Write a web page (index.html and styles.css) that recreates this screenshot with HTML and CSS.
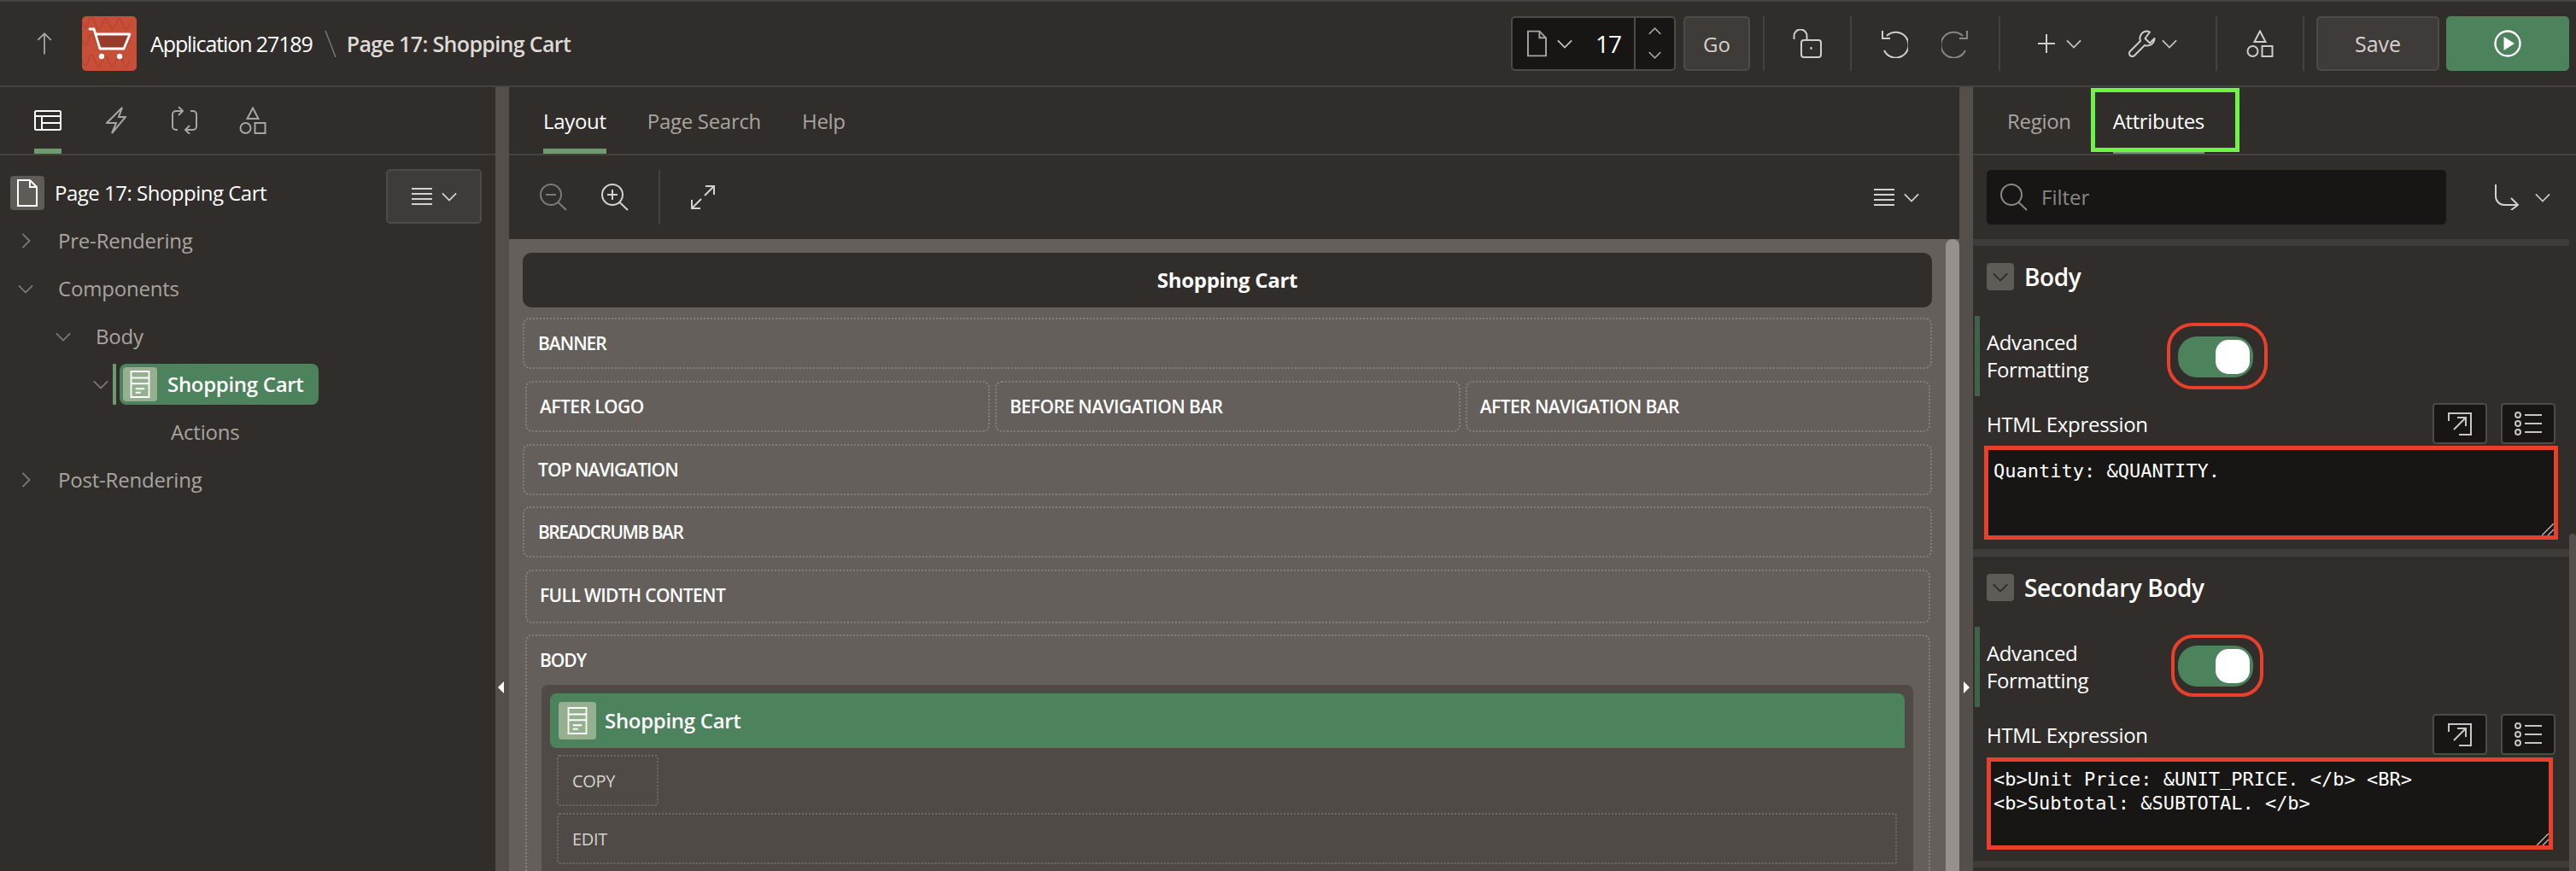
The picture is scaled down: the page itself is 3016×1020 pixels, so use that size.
FILE: index.html
```html
<!DOCTYPE html>
<html lang="en">
<head>
<meta charset="utf-8">
<title>Page 17: Shopping Cart</title>
<link rel="stylesheet" href="styles.css">
</head>
<body>
<svg class="defs" width="0" height="0" aria-hidden="true">
  <defs>
    <symbol id="i-down" viewBox="0 0 20 12"><path d="M1 1.500 10 10.500 19 1.500" fill="none" stroke="currentColor" stroke-width="2"/></symbol>
    <symbol id="i-shapes" viewBox="0 0 32 32"><path d="M16 1.500 22.500 14H9.500Z M18.500 19H30.500V31H18.500Z" fill="none" stroke="currentColor" stroke-width="2"/><circle cx="7.500" cy="25" r="6" fill="none" stroke="currentColor" stroke-width="2"/></symbol>
    <symbol id="i-region" viewBox="0 0 32 44"><path d="M2 2H30V42H2Z M2 12H30 M2 21H30" fill="none" stroke="currentColor" stroke-width="2.400"/><path d="M9 29H23 M9 35H17" fill="none" stroke="currentColor" stroke-width="2.400"/></symbol>
    <symbol id="i-menu" viewBox="0 0 24 20"><path d="M0 1H24 M0 7H24 M0 13H24 M0 19H24" fill="none" stroke="currentColor" stroke-width="2"/></symbol>
    <symbol id="i-open" viewBox="0 0 30 28"><path d="M2 11V2H28V27H14" fill="none" stroke="currentColor" stroke-width="2"/><path d="M8 21 22 7 M12 7H22V17" fill="none" stroke="currentColor" stroke-width="2"/></symbol>
    <symbol id="i-list" viewBox="0 0 32 28"><circle cx="4" cy="4" r="3" fill="none" stroke="currentColor" stroke-width="2"/><circle cx="4" cy="14" r="3" fill="none" stroke="currentColor" stroke-width="2"/><circle cx="4" cy="24" r="3" fill="none" stroke="currentColor" stroke-width="2"/><path d="M12 4H32 M12 14H32 M12 24H32" fill="none" stroke="currentColor" stroke-width="2"/></symbol>
    <symbol id="i-page" viewBox="0 0 24 32"><path d="M1 1H15L23 9V31H1Z" fill="none" stroke="currentColor" stroke-width="2"/><path d="M15 1V9H23" fill="none" stroke="currentColor" stroke-width="2"/></symbol>
  </defs>
</svg>

<header class="topbar">
  <div class="up">
    <svg class="ic-up" viewBox="0 0 20 30"><path d="M10 29V2 M1.500 10.500 10 2l8.500 8.500" fill="none" stroke="currentColor" stroke-width="2"/></svg>
  </div>
  <div class="app-logo">
    <svg class="cart" viewBox="0 0 64 64">
      <path class="squig" d="M0 6c3 10 5 10 8 0s5-4 8 4 5 6 8-2 5-6 8 2 5 6 8-2 5-6 8 2 5 6 8-2 M0 26c3 10 5 10 8 0s5-4 8 4 5 6 8-2 5-6 8 2 5 6 8-2 5-6 8 2 5 6 8-2 M0 50c3 10 5 10 8 0s5-4 8 4 5 6 8-2 5-6 8 2 5 6 8-2 5-6 8 2 5 6 8-2"/>
      <path d="M16 21H56L49 38H21Z" fill="#973b2a"/>
      <path d="M9 15H14L21 38H49L56 21H16" fill="none" stroke="#fff" stroke-width="2.800" stroke-linecap="round" stroke-linejoin="round"/>
      <circle cx="23" cy="47" r="3.200" fill="#fff"/><circle cx="44" cy="47" r="3.200" fill="#fff"/>
    </svg>
  </div>
  <span class="app-name">Application 27189</span>
  <svg class="crumb-sep" viewBox="0 0 14 32"><path d="M1 1 13 32" fill="none" stroke="currentColor" stroke-width="1.400"/></svg>
  <span class="page-name">Page 17: Shopping Cart</span>

  <div class="spacer"></div>

  <div class="page-picker">
    <svg class="ic-page" width="23" height="32"><use href="#i-page"/></svg>
    <svg class="ic-chev picker-chev" width="18" height="11"><use href="#i-down"/></svg>
    <span class="picker-num">17</span>
    <div class="stepper">
      <svg class="step" width="15" height="9" viewBox="0 0 20 12"><path d="M1 10.500 10 1.500 19 10.500" fill="none" stroke="currentColor" stroke-width="2"/></svg>
      <svg class="step" width="15" height="9"><use href="#i-down"/></svg>
    </div>
  </div>
  <button class="btn btn-go">Go</button>

  <span class="tb-divider tb-d1"></span>
  <svg class="tb-ic ic-lock" width="34" height="34" viewBox="0 0 34 34"><path d="M1.500 12V8a7.500 7.500 0 0 1 15 0v5" fill="none" stroke="currentColor" stroke-width="2"/><rect x="10" y="13" width="23" height="20" rx="3" fill="none" stroke="currentColor" stroke-width="2"/><path d="M21.500 21v3" stroke="currentColor" stroke-width="2"/></svg>
  <span class="tb-divider tb-d2"></span>
  <svg class="tb-ic ic-undo" width="32" height="34" viewBox="0 0 32 34"><path d="M7 8A15 15 0 1 1 4 25" fill="none" stroke="currentColor" stroke-width="2"/><path d="M2 2V11H11" fill="none" stroke="currentColor" stroke-width="2"/></svg>
  <svg class="tb-ic ic-redo" width="32" height="34" viewBox="0 0 32 34"><path d="M25 8A15 15 0 1 0 28 25" fill="none" stroke="currentColor" stroke-width="2"/><path d="M30 2V11H21" fill="none" stroke="currentColor" stroke-width="2"/></svg>
  <span class="tb-divider tb-d3"></span>
  <svg class="tb-ic ic-plus" width="20" height="22" viewBox="0 0 20 22"><path d="M10 0V22 M0 11H20" stroke="currentColor" stroke-width="2"/></svg>
  <svg class="ic-chev plus-chev" width="18" height="11"><use href="#i-down"/></svg>
  <svg class="tb-ic ic-wrench" width="32" height="32" viewBox="0 0 32 32"><path d="M22 1.500a8.500 8.500 0 0 0-8 11.500L2 25a3.500 3.500 0 0 0 5 5l12-12a8.500 8.500 0 0 0 11.500-8L25 15.500 19.500 10 25 2.500a8 8 0 0 0-3-1Z" fill="none" stroke="currentColor" stroke-width="2" stroke-linejoin="round"/></svg>
  <svg class="ic-chev wrench-chev" width="18" height="11"><use href="#i-down"/></svg>
  <span class="tb-divider tb-d4"></span>
  <svg class="tb-ic ic-shapes" width="32" height="32"><use href="#i-shapes"/></svg>
  <span class="tb-divider tb-d5"></span>
  <button class="btn btn-save">Save</button>
  <button class="btn btn-run" aria-label="Run">
    <svg width="32" height="32" viewBox="0 0 32 32"><circle cx="16" cy="16" r="14.500" fill="none" stroke="#fff" stroke-width="2.400"/><path d="M11.500 8 24 16 11.500 24Z" fill="#fff"/></svg>
  </button>
</header>

<main class="workspace">
  <section class="left">
    <nav class="tabs left-tabs">
      <div class="icon-tab active">
        <svg class="tab-ic on" width="32" height="24" viewBox="0 0 32 24"><rect x="1" y="1" width="30" height="22" rx="1.500" fill="none" stroke="currentColor" stroke-width="2"/><path d="M1 7H31 M9 7V23 M9 15H31" fill="none" stroke="currentColor" stroke-width="2"/></svg>
      </div>
      <div class="icon-tab">
        <svg class="tab-ic" width="24" height="32" viewBox="0 0 24 32"><path d="M19 1 1 19H12L7 31 23 12H15Z" fill="none" stroke="currentColor" stroke-width="2"/></svg>
      </div>
      <div class="icon-tab">
        <svg class="tab-ic" width="32" height="32" viewBox="0 0 32 32"><path d="M14 5H6A4 4 0 0 0 2 9V23A4 4 0 0 0 6 27H8 M23 5H26A4 4 0 0 1 30 9V23A4 4 0 0 1 26 27H17" fill="none" stroke="currentColor" stroke-width="2"/><path d="M9 0l5 5-5 5 M22 22l-5 5 5 5" fill="none" stroke="currentColor" stroke-width="2"/></svg>
      </div>
      <div class="icon-tab">
        <svg class="tab-ic" width="32" height="32"><use href="#i-shapes"/></svg>
      </div>
    </nav>
    <div class="tree">
      <div class="tree-head">
        <span class="page-badge"><svg width="24" height="32"><use href="#i-page"/></svg></span>
        <span class="tree-title">Page 17: Shopping Cart</span>
        <button class="btn menu-btn">
          <svg width="24" height="20"><use href="#i-menu"/></svg>
          <svg width="18" height="11"><use href="#i-down"/></svg>
        </button>
      </div>
      <div class="tree-row lvl0"><svg class="tw tw-right" width="11" height="18" viewBox="0 0 12 20"><path d="M1.500 1 10.500 10 1.500 19" fill="none" stroke="currentColor" stroke-width="2"/></svg><span>Pre-Rendering</span></div>
      <div class="tree-row lvl0"><svg class="tw" width="18" height="11"><use href="#i-down"/></svg><span>Components</span></div>
      <div class="tree-row lvl1"><svg class="tw" width="18" height="11"><use href="#i-down"/></svg><span>Body</span></div>
      <div class="tree-row lvl2">
        <svg class="tw" width="18" height="11"><use href="#i-down"/></svg>
        <span class="sel-bar"></span>
        <span class="sel-pill">
          <span class="region-badge"><svg width="24" height="34"><use href="#i-region"/></svg></span>
          <span class="sel-text">Shopping Cart</span>
        </span>
      </div>
      <div class="tree-row lvl3"><span>Actions</span></div>
      <div class="tree-row lvl0"><svg class="tw tw-right" width="11" height="18" viewBox="0 0 12 20"><path d="M1.500 1 10.500 10 1.500 19" fill="none" stroke="currentColor" stroke-width="2"/></svg><span>Post-Rendering</span></div>
    </div>
  </section>

  <div class="gutter"><span class="arrow arrow-left"></span></div>

  <section class="center">
    <nav class="tabs center-tabs">
      <span class="tab active">Layout</span>
      <span class="tab">Page Search</span>
      <span class="tab">Help</span>
    </nav>
    <div class="canvas-tools">
      <svg class="zoom-ic dim" width="32" height="32" viewBox="0 0 32 32"><circle cx="13" cy="13" r="12" fill="none" stroke="currentColor" stroke-width="2"/><path d="M7 13H19 M21.500 22 31 31" fill="none" stroke="currentColor" stroke-width="2"/></svg>
      <svg class="zoom-ic zoom-in" width="32" height="32" viewBox="0 0 32 32"><circle cx="13" cy="13" r="12" fill="none" stroke="currentColor" stroke-width="2"/><path d="M7 13H19 M13 7V19 M21.500 22 31 31" fill="none" stroke="currentColor" stroke-width="2"/></svg>
      <span class="tool-div"></span>
      <svg class="expand" width="28" height="28" viewBox="0 0 28 28"><path d="M17 1H27V11 M27 1 16 12 M11 27H1V17 M1 27 12 16" fill="none" stroke="currentColor" stroke-width="2"/></svg>
      <div class="spacer"></div>
      <svg class="tool-menu" width="24" height="20"><use href="#i-menu"/></svg>
      <svg class="tool-chev" width="18" height="11"><use href="#i-down"/></svg>
    </div>
    <div class="canvas">
      <div class="canvas-inner">
        <div class="page-head">Shopping Cart</div>
        <div class="slot s-banner">BANNER</div>
        <div class="slot-row">
          <div class="slot">AFTER LOGO</div>
          <div class="slot">BEFORE NAVIGATION BAR</div>
          <div class="slot">AFTER NAVIGATION BAR</div>
        </div>
        <div class="slot s-topnav">TOP NAVIGATION</div>
        <div class="slot s-crumb">BREADCRUMB BAR</div>
        <div class="slot s-full">FULL WIDTH CONTENT</div>
        <div class="slot body-slot">
          <div class="body-label">BODY</div>
          <div class="region">
            <div class="region-head">
              <span class="region-icon"><svg width="24" height="34"><use href="#i-region"/></svg></span>
              <span>Shopping Cart</span>
            </div>
            <div class="inner-slot copy">COPY</div>
            <div class="inner-slot edit">EDIT</div>
          </div>
        </div>
      </div>
      <div class="scrollbar"></div>
    </div>
  </section>

  <div class="gutter"><span class="arrow arrow-right"></span></div>

  <section class="right">
    <nav class="tabs right-tabs">
      <span class="tab">Region</span>
      <span class="tab active">Attributes<span class="green-mark"></span></span>
    </nav>
    <div class="filter-row">
      <div class="filter">
        <svg class="search" width="32" height="32" viewBox="0 0 32 32"><circle cx="13" cy="13" r="12" fill="none" stroke="currentColor" stroke-width="2"/><path d="M21.500 22 31 31" fill="none" stroke="currentColor" stroke-width="2"/></svg>
        <span>Filter</span>
      </div>
      <svg class="goto" width="28" height="30" viewBox="0 0 28 30"><path d="M1 0V14A10 10 0 0 0 11 24H27 M19 16 27 24 19 30" fill="none" stroke="currentColor" stroke-width="2"/></svg>
      <svg class="goto-chev" width="18" height="11"><use href="#i-down"/></svg>
    </div>
    <div class="props">
      <div class="props-col">
        <div class="group">
          <div class="group-head">
            <span class="collapse"><svg width="18" height="11"><use href="#i-down"/></svg></span>
            <span class="group-title">Body</span>
          </div>
          <div class="field">
            <span class="field-label">Advanced<br>Formatting</span>
            <span class="red-round first"><span class="switch"><span class="knob"></span></span></span>
          </div>
          <div class="expr-head">
            <span class="expr-label">HTML Expression</span>
            <span class="square"><svg width="30" height="28"><use href="#i-open"/></svg></span>
            <span class="square"><svg width="32" height="28"><use href="#i-list"/></svg></span>
          </div>
          <div class="code code-a"><pre>Quantity: &amp;QUANTITY.</pre><svg class="grip" width="14" height="14" viewBox="0 0 14 14"><path d="M0 14 14 0 M7 14 14 7" stroke="#b5b2ad" stroke-width="1.500"/></svg></div>
        </div>
        <div class="group group-2">
          <div class="group-head">
            <span class="collapse"><svg width="18" height="11"><use href="#i-down"/></svg></span>
            <span class="group-title">Secondary Body</span>
          </div>
          <div class="field">
            <span class="field-label">Advanced<br>Formatting</span>
            <span class="red-round second"><span class="switch"><span class="knob"></span></span></span>
          </div>
          <div class="expr-head">
            <span class="expr-label">HTML Expression</span>
            <span class="square"><svg width="30" height="28"><use href="#i-open"/></svg></span>
            <span class="square"><svg width="32" height="28"><use href="#i-list"/></svg></span>
          </div>
          <div class="code code-b"><pre>&lt;b&gt;Unit Price: &amp;UNIT_PRICE. &lt;/b&gt; &lt;BR&gt;
&lt;b&gt;Subtotal: &amp;SUBTOTAL. &lt;/b&gt;</pre><svg class="grip" width="14" height="14" viewBox="0 0 14 14"><path d="M0 14 14 0 M7 14 14 7" stroke="#b5b2ad" stroke-width="1.500"/></svg></div>
        </div>
        <div class="group-rest"></div>
      </div>
      <div class="props-scroll"><span class="props-thumb"></span></div>
    </div>
  </section>
</main>
</body>
</html>
```

FILE: styles.css
```css
* { box-sizing: border-box; }
html, body { margin: 0; height: 100%; }
body {
  width: 3016px;
  height: 1020px;
  overflow: hidden;
  background: #312d2a;
  color: #fff;
  font-family: "Open Sans", "Noto Sans", sans-serif;
  font-size: 24px;
}
.defs { position: absolute; }
svg { display: block; flex: none; }
pre { margin: 0; font: inherit; }
.spacer { flex: 1; }

/* top bar */
.topbar {
  height: 102px;
  display: flex;
  align-items: center;
  border-top: 2px solid #45413d;
  border-bottom: 2px solid #45413d;
  color: #d5d2ce;
}
.up { width: 96px; padding-left: 43px; color: #a8a5a0; }
.ic-up { width: 18px; height: 28px; }
.app-logo { width: 64px; height: 64px; border-radius: 5px; background: #c74f38; margin-right: 16px; overflow: hidden; }
.cart { width: 64px; height: 64px; }
.squig { fill: none; stroke: #b8452f; stroke-width: 1.500; }
.app-name { font-size: 25px; color: #fff; letter-spacing: -1.100px; white-space: nowrap; }
.crumb-sep { width: 14px; height: 32px; margin: 0 12px 0 14px; color: #7d7974; }
.page-name { font-size: 25px; font-weight: 600; color: #dedbd7; letter-spacing: -.650px; white-space: nowrap; }

.page-picker {
  width: 193px;
  height: 64px;
  display: flex;
  align-items: center;
  background: #171614;
  border: 2px solid #4e4a46;
  border-radius: 5px;
  color: #a8a5a0;
}
.ic-page { margin-left: 17px; }
.picker-chev { margin-left: 12px; }
.picker-num { margin-left: 27px; width: 30px; color: #fff; font-size: 28px; letter-spacing: -1px; }
.stepper {
  margin-left: auto;
  width: 47px;
  height: 100%;
  border-left: 2px solid #4e4a46;
  display: flex;
  flex-direction: column;
  align-items: center;
  justify-content: space-between;
  padding: 11px 0 12px;
}
.btn {
  font: inherit;
  color: #d5d2ce;
  background: #3f3b38;
  border: 2px solid #4e4a46;
  border-radius: 5px;
  padding: 0;
  display: flex;
  align-items: center;
  justify-content: center;
}
.btn-go { width: 78px; height: 64px; margin-left: 9px; font-size: 24px; }
.tb-divider { width: 2px; height: 64px; background: #45413d; flex: none; }
.tb-d1 { margin-left: 15px; }
.tb-d2 { margin-left: 33px; }
.tb-d3 { margin-left: 35px; }
.tb-d4 { margin-left: 45px; }
.tb-d5 { margin-left: 34px; }
.ic-chev { color: #c8c5c0; }
.tb-ic { color: #d0cdc8; }
.ic-lock { margin-left: 33px; }
.ic-undo { margin-left: 34px; }
.ic-redo { margin-left: 39px; color: #8a8682; }
.ic-plus { margin-left: 44px; }
.plus-chev { margin-left: 13px; }
.ic-wrench { margin-left: 55px; }
.wrench-chev { margin-left: 7px; }
.ic-shapes { margin-left: 34px; }
.btn-save { width: 144px; height: 64px; margin-left: 14px; font-size: 25px; }
.btn-run { width: 144px; height: 64px; margin-left: 8px; background: #4c825c; border-color: #4c825c; margin-right: 8px; }

/* columns */
.workspace { display: flex; height: 918px; }
.left { width: 580px; flex: none; }
.center { width: 1698px; flex: none; display: flex; flex-direction: column; }
.right { width: 706px; flex: none; display: flex; flex-direction: column; }
.gutter { width: 16px; flex: none; background: #544f4b; position: relative; }
.arrow { position: absolute; top: 696px; width: 0; height: 0; border-top: 7px solid transparent; border-bottom: 7px solid transparent; }
.arrow-left { left: 3px; border-right: 7px solid #fff; }
.arrow-right { left: 5px; border-left: 7px solid #fff; }

/* tabs */
.tabs {
  height: 80px;
  flex: none;
  display: flex;
  border-bottom: 2px solid #45413d;
}
.left-tabs { padding-left: 40px; gap: 48px; }
.icon-tab { width: 32px; height: 78px; display: flex; align-items: center; justify-content: center; color: #a8a5a0; }
.icon-tab.active { box-shadow: inset 0 -6px 0 #6f9a6f; }
.tab-ic.on { color: #fff; }
.tab { height: 78px; display: flex; align-items: center; font-size: 24px; color: #a8a5a0; letter-spacing: -.300px; position: relative; white-space: nowrap; }
.tab.active { color: #fff; box-shadow: inset 0 -6px 0 #6f9a6f; }
.center-tabs { padding-left: 40px; gap: 48px; }
.right-tabs { padding-left: 40px; gap: 49px; }
.right-tabs .active { letter-spacing: -.400px; }
.green-mark { position: absolute; left: -26px; right: -41px; top: 1px; bottom: 2px; border: 5px solid #6cf542; }

/* tree */
.tree { padding-top: 16px; }
.tree-head { display: flex; height: 56px; align-items: center; padding: 0 16px 0 12px; }
.page-badge { width: 40px; height: 40px; border-radius: 4px; background: #5f5b57; display: flex; align-items: center; justify-content: center; color: #fff; }
.page-badge svg { width: 24px; height: 32px; }
.tree-title { margin-left: 12px; flex: 1; letter-spacing: -.500px; white-space: nowrap; padding-bottom: 2px; }
.menu-btn { width: 112px; height: 64px; align-self: flex-start; gap: 11px; color: #d5d2ce; }
.tree-row { height: 56px; display: flex; align-items: center; color: #a8a5a0; letter-spacing: -.200px; position: relative; white-space: nowrap; }
.tree-row > span:not(.sel-bar):not(.sel-pill) { padding-bottom: 2px; }
.tw { color: #7d7974; flex: none; }
.lvl0 { padding-left: 21px; }
.lvl0 .tw { margin-right: 29px; }
.lvl0 .tw-right { margin-left: 4px; margin-right: 32px; }
.lvl1 { padding-left: 65px; }
.lvl1 .tw { margin-right: 29px; }
.lvl2 { padding-left: 109px; }
.lvl3 { padding-left: 200px; }
.sel-bar { width: 4px; height: 48px; background: #6f9a6f; margin-left: 5px; border-radius: 1px; }
.sel-pill { margin-left: 4px; width: 233px; height: 48px; background: #4c825c; border-radius: 8px; display: flex; align-items: center; padding-left: 4px; color: #fff; font-weight: 600; letter-spacing: -.300px; }
.region-badge { width: 40px; height: 40px; border-radius: 4px; background: #94b08e; display: flex; align-items: center; justify-content: center; }
.sel-text { margin-left: 12px; padding-bottom: 2px; }

/* center */
.canvas-tools { height: 98px; flex: none; display: flex; align-items: center; padding: 0 0 0 36px; color: #d5d2ce; }
.zoom-ic.dim { color: #7d7974; }
.zoom-in { margin-left: 40px; }
.tool-div { width: 2px; height: 64px; background: #45413d; margin-left: 35px; }
.expand { margin-left: 36px; }
.tool-menu { margin-right: 11px; }
.tool-chev { margin-right: 47px; }
.canvas { flex: 1; display: flex; min-height: 0; background: #645f5a; overflow: hidden; }
.canvas-inner { flex: 1; padding: 16px 16px 0; min-width: 0; }
.scrollbar { width: 16px; flex: none; background: #96918c; border-radius: 8px 8px 0 0; }
.page-head {
  height: 64px;
  background: #312d2a;
  border-radius: 10px;
  display: flex;
  align-items: center;
  justify-content: center;
  font-size: 24px;
  font-weight: 700;
  letter-spacing: -.300px;
  margin-bottom: 12px;
  padding-bottom: 2px;
}
.slot {
  border: 2px dotted #857f7a;
  border-radius: 8px;
  font-size: 21px;
  font-weight: 600;
  display: flex;
  align-items: center;
  padding-left: 16px;
  letter-spacing: -1px;
  color: #fff;
  white-space: nowrap;
}
.s-banner { height: 60px; margin-bottom: 14px; }
.slot-row { display: grid; grid-template-columns: 1fr 1fr 1fr; gap: 6px; height: 60px; margin: 0 2px 14px 3px; }
.slot-row .slot { padding-left: 15px; letter-spacing: -.550px; }
.s-topnav { height: 60px; margin-bottom: 13px; letter-spacing: -.950px; }
.s-crumb { height: 60px; margin-bottom: 14px; letter-spacing: -1.500px; }
.s-full { height: 63px; margin: 0 2px 13px 3px; padding-left: 15px; padding-bottom: 3px; letter-spacing: -.600px; }
.body-slot { display: block; padding: 0 18px 0 17px; height: 277px; margin: 0 2px 0 3px; border-bottom: 0; border-radius: 8px 8px 0 0; }
.body-label { height: 57px; display: flex; align-items: center; padding-bottom: 2px; margin-left: -2px; }
.region { background: #4f4a46; border-radius: 8px 8px 0 0; padding: 10px 10px 0; height: 218px; font-weight: 400; }
.region-head { height: 64px; background: #4c825c; border-radius: 8px 8px 0 8px; display: flex; align-items: center; padding-left: 10px; gap: 10px; font-size: 24px; font-weight: 600; letter-spacing: -.300px; }
.region-head > span:last-child { padding-bottom: 2px; }
.region-icon { width: 44px; height: 44px; background: #94b08e; border-radius: 4px; display: flex; align-items: center; justify-content: center; }
.inner-slot { border: 2px dotted #6f6a65; border-radius: 3px; height: 60px; display: flex; align-items: center; padding-left: 16px; font-size: 20px; color: #d5d2ce; letter-spacing: -.300px; }
.copy { width: 119px; margin: 8px 0 8px 8px; }
.edit { margin: 0 9px 0 8px; }

/* right */
.filter-row { height: 98px; flex: none; display: flex; align-items: center; padding-left: 16px; color: #d5d2ce; }
.filter { width: 538px; height: 64px; background: #171614; border-radius: 5px; display: flex; align-items: center; padding-left: 16px; color: #8a8682; gap: 16px; }
.filter span { padding-bottom: 2px; }
.goto { margin-left: 57px; }
.goto-chev { margin-left: 19px; color: #c8c5c0; }
.props { flex: 1; min-height: 0; display: flex; background: #3f3b38; padding-top: 8px; }
.props-col { flex: 1; min-width: 0; }
.props-scroll { width: 8px; flex: none; background: #312d2a; margin-top: -8px; padding-top: 345px; }
.props-thumb { display: block; height: 395px; background: #544f4b; border-radius: 4px 4px 0 0; }
.group { background: #312d2a; height: 355px; padding-top: 20px; margin-bottom: 9px; }
.group-2 { height: 356px; margin-bottom: 8px; }
.group-rest { height: 4px; background: #312d2a; }
.group-head { height: 32px; display: flex; align-items: center; padding-left: 16px; margin-bottom: 30px; }
.collapse { width: 32px; height: 32px; background: #5f5b57; border-radius: 4px; display: flex; align-items: center; justify-content: center; color: #2b2825; }
.group-title { margin-left: 12px; font-size: 28px; font-weight: 600; letter-spacing: -.400px; white-space: nowrap; }
.field { height: 94px; border-left: 6px solid #3f6349; margin-left: 2px; padding-left: 8px; display: flex; align-items: center; line-height: 32px; }
.field-label { width: 211px; flex: none; font-size: 24px; letter-spacing: -.400px; }
.red-round { display: block; flex: none; border: 4px solid #e8402a; position: relative; }
.red-round.first { width: 118px; height: 78px; border-radius: 30px; padding: 12px 0 0 9px; }
.red-round.second { width: 108px; height: 73px; margin-left: 5px; border-radius: 26px; padding: 9px 0 0 4px; margin-top: -4px; }
.switch { display: block; width: 88px; height: 48px; background: #4c825c; border-radius: 22px; position: relative; }
.knob { position: absolute; right: 4px; top: 4px; width: 40px; height: 40px; background: #fff; border-radius: 15px; }
.expr-head { display: flex; align-items: center; margin-top: 8px; padding: 0 16px; gap: 16px; height: 48px; }
.expr-label { flex: 1; font-size: 24px; letter-spacing: -.300px; white-space: nowrap; }
.square { width: 64px; height: 48px; background: #171614; border: 2px solid #4e4a46; border-radius: 4px; display: flex; align-items: center; justify-content: center; color: #c8c5c0; }
.code { background: #171614; border: 5px solid #e8402a; font-family: "DejaVu Sans Mono", monospace; font-size: 22px; line-height: 28px; color: #fff; position: relative; }
.code-a { margin: 2px 13px 0 13px; height: 110px; padding: 11px 0 0 6px; }
.code-b { margin: 3px 19px 0 16px; height: 108px; padding: 7px 0 0 3px; }
.grip { position: absolute; right: 0; bottom: 0; }
```
